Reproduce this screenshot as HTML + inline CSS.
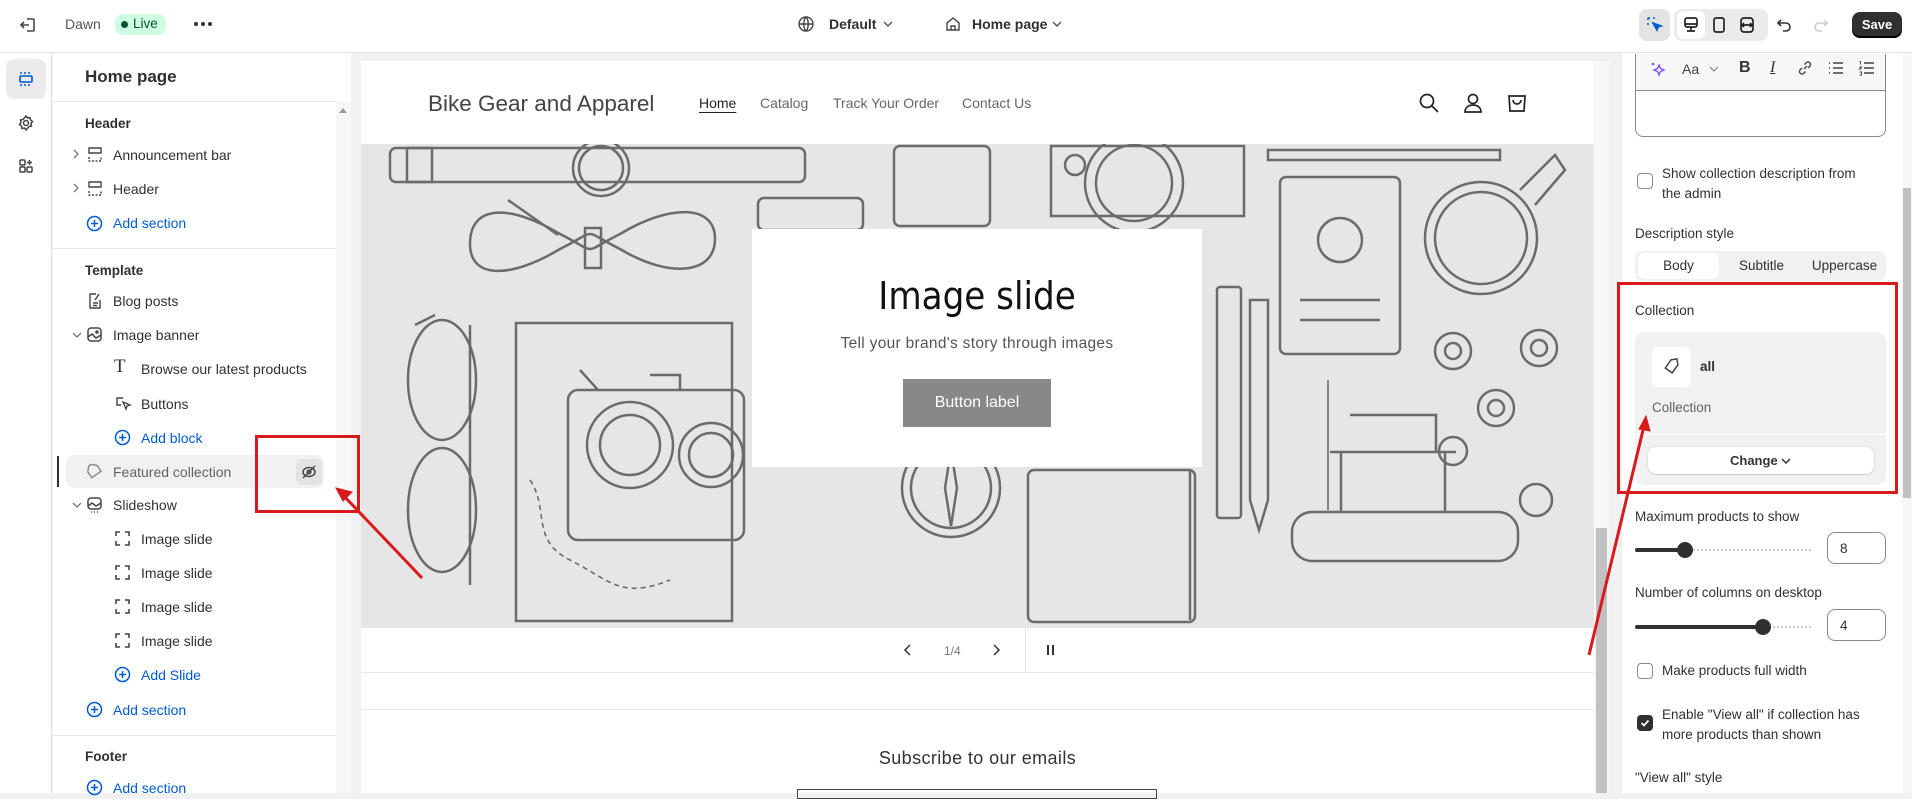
<!DOCTYPE html>
<html><head><meta charset="utf-8"><style>
*{box-sizing:border-box;margin:0;padding:0}
body{width:1912px;height:793px;overflow:hidden;background:#f1f1f1;font-family:"Liberation Sans",sans-serif;color:#303030;position:relative}
.a{position:absolute}
.t{position:absolute;font-size:14px;white-space:nowrap}
.blue{color:#005bd3}
.ic{position:absolute}
</style></head><body>

<!-- top bar -->
<div class="a" style="left:0;top:0;width:1912px;height:53px;background:#fff;border-bottom:1px solid #e3e3e3"></div>
<svg class="ic" style="left:18px;top:15px" width="20" height="20" viewBox="0 0 20 20" fill="none" stroke="#444" stroke-width="1.6"><path d="M9 4h6a1 1 0 0 1 1 1v10a1 1 0 0 1-1 1H9"/><path d="M11 10H3M6 7l-3 3 3 3"/></svg>
<div class="t" style="left:65px;top:16px;color:#555">Dawn</div>
<div class="a" style="left:115px;top:14px;width:51px;height:21px;background:#cdfee1;border-radius:8px"></div>
<div class="a" style="left:121px;top:21px;width:7px;height:7px;border-radius:50%;background:#0c5132"></div>
<div class="t" style="left:133px;top:16px;color:#0c5132;font-size:13.5px">Live</div>
<svg class="ic" style="left:193px;top:20px" width="20" height="8" fill="#333"><circle cx="3" cy="4" r="2"/><circle cx="10" cy="4" r="2"/><circle cx="17" cy="4" r="2"/></svg>

<svg class="ic" style="left:797px;top:15px" width="18" height="18" viewBox="0 0 18 18" fill="none" stroke="#444" stroke-width="1.4"><circle cx="9" cy="9" r="7"/><path d="M2 9h14M9 2c-3 3-3 11 0 14M9 2c3 3 3 11 0 14"/></svg>
<div class="t" style="left:829px;top:16px;font-weight:bold;font-size:14px">Default</div>
<svg class="ic" style="left:882px;top:19px" width="12" height="10" viewBox="0 0 12 10" fill="none" stroke="#555" stroke-width="1.4"><path d="M2 3l4 4 4-4"/></svg>
<svg class="ic" style="left:944px;top:15px" width="18" height="18" viewBox="0 0 18 18" fill="none" stroke="#444" stroke-width="1.4"><path d="M3 8l6-5 6 5v7H3z"/><path d="M7 15v-4h4v4"/></svg>
<div class="t" style="left:972px;top:16px;font-weight:bold">Home page</div>
<svg class="ic" style="left:1051px;top:19px" width="12" height="10" viewBox="0 0 12 10" fill="none" stroke="#555" stroke-width="1.4"><path d="M2 3l4 4 4-4"/></svg>

<div class="a" style="left:1639px;top:9px;width:31px;height:32px;background:#e3e3e3;border-radius:8px"></div>
<svg class="ic" style="left:1645px;top:15px" width="20" height="20" viewBox="0 0 20 20" fill="none" stroke="#005bd3" stroke-width="1.6"><path d="M3 3h2M8 3h2M3 3v2M3 8v2" /><path d="M8 8l8 3-3 1-1 3z" fill="#005bd3"/></svg>
<div class="a" style="left:1674px;top:9px;width:94px;height:32px;background:#ebebeb;border-radius:8px"></div>
<div class="a" style="left:1677px;top:11px;width:28px;height:28px;background:#fff;border-radius:7px"></div>
<svg class="ic" style="left:1682px;top:16px" width="18" height="18" viewBox="0 0 18 18" fill="none" stroke="#222" stroke-width="1.7"><rect x="3" y="2" width="12" height="9" rx="2"/><path d="M9 11v3M5 15h8M3 8h12"/></svg>
<svg class="ic" style="left:1710px;top:16px" width="18" height="18" viewBox="0 0 18 18" fill="none" stroke="#222" stroke-width="1.7"><rect x="4" y="2" width="10" height="14" rx="2"/></svg>
<svg class="ic" style="left:1738px;top:16px" width="18" height="18" viewBox="0 0 18 18" fill="none" stroke="#222" stroke-width="1.7"><rect x="3" y="2" width="12" height="14" rx="3"/><path d="M5 9h8M6 7l-2 2 2 2M12 7l2 2-2 2"/></svg>
<svg class="ic" style="left:1776px;top:16px" width="18" height="18" viewBox="0 0 18 18" fill="none" stroke="#333" stroke-width="1.6"><path d="M5 4L2 7l3 3"/><path d="M2 7h8a4 4 0 0 1 0 8H7"/></svg>
<svg class="ic" style="left:1811px;top:16px" width="18" height="18" viewBox="0 0 18 18" fill="none" stroke="#ccc" stroke-width="1.6"><path d="M13 4l3 3-3 3"/><path d="M16 7H8a4 4 0 0 0 0 8h3"/></svg>
<div class="a" style="left:1852px;top:12px;width:50px;height:26px;background:#303030;border-radius:8px;color:#fff;font-weight:bold;font-size:13px;text-align:center;line-height:26px;box-shadow:inset 0 -2px 0 #000">Save</div>

<!-- left rail -->
<div class="a" style="left:0;top:53px;width:52px;height:740px;background:#fff;border-right:1px solid #e3e3e3"></div>
<div class="a" style="left:6px;top:59px;width:40px;height:40px;background:#ebebeb;border-radius:8px"></div>
<svg class="ic" style="left:17px;top:70px" width="18" height="18" viewBox="0 0 18 18" fill="none" stroke="#005bd3" stroke-width="1.6"><path d="M3 3h12M3 15h12" stroke-dasharray="2 2"/><rect x="3" y="6" width="12" height="6" rx="1"/></svg>
<svg class="ic" style="left:17px;top:114px" width="18" height="18" viewBox="0 0 18 18" fill="none" stroke="#444" stroke-width="1.5"><circle cx="9" cy="9" r="2.5"/><path d="M9 2l1.5 2 2.5-.5.5 2.5 2 1.5-1.5 2 .5 2.5-2.5.5L9 16l-1.5-2-2.5.5-.5-2.5-2-1.5 1.5-2L3.5 6l2.5-.5z"/></svg>
<svg class="ic" style="left:17px;top:157px" width="18" height="18" viewBox="0 0 18 18" fill="none" stroke="#444" stroke-width="1.5"><rect x="3" y="3" width="5" height="5" rx="1"/><rect x="3" y="10" width="5" height="5" rx="1"/><rect x="10" y="10" width="5" height="5" rx="1"/><path d="M12.5 3v5M10 5.5h5"/></svg>

<!-- sidebar -->
<div class="a" style="left:53px;top:53px;width:298px;height:740px;background:#fff"></div>
<div class="a" style="left:336px;top:101px;width:15px;height:692px;background:#f7f7f7"></div>
<svg class="ic" style="left:338px;top:106px" width="10" height="8"><path d="M1 7l4-5 4 5z" fill="#999"/></svg>
<div class="t" style="left:85px;top:67px;font-size:17px;font-weight:bold">Home page</div>
<div class="a" style="left:53px;top:101px;width:283px;height:1px;background:#e8e8e8"></div>
<div class="t" style="left:85px;top:116px;font-weight:bold;font-size:13.5px">Header</div>
<svg class="ic" style="left:71px;top:148px" width="10" height="12" fill="none" stroke="#777" stroke-width="1.3"><path d="M3 2l4 4-4 4"/></svg>
<svg class="ic" style="left:87px;top:146px" width="16" height="18" fill="none" stroke="#444" stroke-width="1.4"><path d="M2 11v4h12v-4" stroke-dasharray="2 1.5"/><path d="M2 2h12v5H2z"/></svg>
<div class="t" style="left:113px;top:147px">Announcement bar</div>
<svg class="ic" style="left:71px;top:182px" width="10" height="12" fill="none" stroke="#777" stroke-width="1.3"><path d="M3 2l4 4-4 4"/></svg>
<svg class="ic" style="left:87px;top:180px" width="16" height="18" fill="none" stroke="#444" stroke-width="1.4"><path d="M2 11v4h12v-4" stroke-dasharray="2 1.5"/><path d="M2 2h12v5H2z"/></svg>
<div class="t" style="left:113px;top:181px">Header</div>
<svg class="ic" style="left:86px;top:215px" width="17" height="17" fill="none" stroke="#005bd3" stroke-width="1.5"><circle cx="8.5" cy="8.5" r="7"/><path d="M8.5 5v7M5 8.5h7"/></svg>
<div class="t blue" style="left:113px;top:215px">Add section</div>
<div class="a" style="left:53px;top:248px;width:283px;height:1px;background:#e8e8e8"></div>
<div class="t" style="left:85px;top:263px;font-weight:bold;font-size:13.5px">Template</div>
<svg class="ic" style="left:87px;top:292px" width="16" height="18" fill="none" stroke="#444" stroke-width="1.4"><path d="M9 2H3v14h10V8"/><path d="M12 2l-4 6M6 11h5M6 13.5h4"/></svg>
<div class="t" style="left:113px;top:293px">Blog posts</div>
<svg class="ic" style="left:71px;top:330px" width="12" height="10" fill="none" stroke="#777" stroke-width="1.3"><path d="M2 3l4 4 4-4"/></svg>
<svg class="ic" style="left:86px;top:326px" width="17" height="17" fill="none" stroke="#444" stroke-width="1.5"><rect x="2" y="2" width="13" height="13" rx="3"/><path d="M2 11l4-3 4 4 5-3"/><circle cx="11" cy="6" r="1"/></svg>
<div class="t" style="left:113px;top:327px">Image banner</div>
<div class="t" style="left:114px;top:356px;font-family:'Liberation Serif',serif;font-size:19px">T</div>
<div class="t" style="left:141px;top:361px">Browse our latest products</div>
<svg class="ic" style="left:114px;top:395px" width="18" height="18" fill="none" stroke="#444" stroke-width="1.4"><path d="M9 3H3v7h4"/><path d="M9 7l7 3-3 1-1 3z"/></svg>
<div class="t" style="left:141px;top:396px">Buttons</div>
<svg class="ic" style="left:114px;top:429px" width="17" height="17" fill="none" stroke="#005bd3" stroke-width="1.5"><circle cx="8.5" cy="8.5" r="7"/><path d="M8.5 5v7M5 8.5h7"/></svg>
<div class="t blue" style="left:141px;top:430px">Add block</div>
<div class="a" style="left:57px;top:456px;width:2px;height:31px;background:#303030"></div>
<div class="a" style="left:66px;top:455px;width:258px;height:33px;background:#f1f1f1;border-radius:8px"></div>
<svg class="ic" style="left:86px;top:463px" width="17" height="17" fill="none" stroke="#888" stroke-width="1.4"><path d="M10 2l5 5-8 8-5-5V4l2-2z" transform="rotate(10 8 8)"/></svg>
<div class="t" style="left:113px;top:464px;color:#616161">Featured collection</div>
<div class="a" style="left:296px;top:459px;width:26px;height:26px;background:#e3e3e3;border-radius:6px"></div>
<svg class="ic" style="left:300px;top:463px" width="18" height="18" fill="none" stroke="#444" stroke-width="1.5"><ellipse cx="9" cy="9" rx="6" ry="4.5"/><circle cx="9" cy="9" r="1.8"/><path d="M3 15L15 3"/></svg>
<svg class="ic" style="left:71px;top:500px" width="12" height="10" fill="none" stroke="#777" stroke-width="1.3"><path d="M2 3l4 4 4-4"/></svg>
<svg class="ic" style="left:86px;top:496px" width="17" height="18" fill="none" stroke="#444" stroke-width="1.5"><rect x="2" y="2" width="13" height="11" rx="3"/><path d="M2 10l4-3 4 3 5-3"/><path d="M5 16h1M8 16h1M11 16h1"/></svg>
<div class="t" style="left:113px;top:497px">Slideshow</div>
<div class="t" style="left:141px;top:531px">Image slide</div>
<div class="t" style="left:141px;top:565px">Image slide</div>
<div class="t" style="left:141px;top:599px">Image slide</div>
<div class="t" style="left:141px;top:633px">Image slide</div>
<svg class="ic" style="left:114px;top:530px" width="17" height="120" fill="none" stroke="#444" stroke-width="1.6"><g id="fr"><path d="M2 6V2h4M11 2h4v4M15 11v4h-4M6 15H2v-4"/></g><use href="#fr" y="34"/><use href="#fr" y="68"/><use href="#fr" y="102"/></svg>
<svg class="ic" style="left:114px;top:666px" width="17" height="17" fill="none" stroke="#005bd3" stroke-width="1.5"><circle cx="8.5" cy="8.5" r="7"/><path d="M8.5 5v7M5 8.5h7"/></svg>
<div class="t blue" style="left:141px;top:667px">Add Slide</div>
<svg class="ic" style="left:86px;top:701px" width="17" height="17" fill="none" stroke="#005bd3" stroke-width="1.5"><circle cx="8.5" cy="8.5" r="7"/><path d="M8.5 5v7M5 8.5h7"/></svg>
<div class="t blue" style="left:113px;top:702px">Add section</div>
<div class="a" style="left:53px;top:735px;width:283px;height:1px;background:#e8e8e8"></div>
<div class="t" style="left:85px;top:749px;font-weight:bold;font-size:13.5px">Footer</div>
<svg class="ic" style="left:86px;top:779px" width="17" height="17" fill="none" stroke="#005bd3" stroke-width="1.5"><circle cx="8.5" cy="8.5" r="7"/><path d="M8.5 5v7M5 8.5h7"/></svg>
<div class="t blue" style="left:113px;top:780px">Add section</div>

<!-- preview -->
<div class="a" style="left:361px;top:61px;width:1233px;height:732px;background:#fff"></div>
<div class="a" style="left:1594px;top:61px;width:15px;height:732px;background:#f7f7f7"></div>
<div class="a" style="left:1596px;top:528px;width:11px;height:265px;background:#c1c1c1"></div>
<div class="t" style="left:428px;top:91px;font-size:22.5px;color:#444">Bike Gear and Apparel</div>
<div class="t" style="left:699px;top:95px;font-size:14px;color:#222;text-decoration:underline;text-underline-offset:4px">Home</div>
<div class="t" style="left:760px;top:95px;font-size:14px;color:#666">Catalog</div>
<div class="t" style="left:833px;top:95px;font-size:14px;color:#666">Track Your Order</div>
<div class="t" style="left:962px;top:95px;font-size:14px;color:#666">Contact Us</div>
<svg class="ic" style="left:1417px;top:91px" width="24" height="24" fill="none" stroke="#222" stroke-width="1.7"><circle cx="10" cy="10" r="6.5"/><path d="M15 15l6 6"/></svg>
<svg class="ic" style="left:1461px;top:91px" width="24" height="24" fill="none" stroke="#222" stroke-width="1.7"><circle cx="12" cy="8" r="4.5"/><path d="M4 21c0-5 4-7 8-7s8 2 8 7z"/></svg>
<svg class="ic" style="left:1505px;top:90px" width="24" height="24" fill="none" stroke="#222" stroke-width="1.7"><path d="M4 6h16l-1 15H5z"/><path d="M8 10a4 4 0 0 0 8 0"/></svg>

<div class="a" style="left:361px;top:144px;width:1233px;height:484px;background:#e6e6e6;overflow:hidden"></div>
<svg class="a" style="left:361px;top:144px" width="1233" height="484" viewBox="361 144 1233 484" fill="none" stroke="#6b6b6b" stroke-width="2.5">
<rect x="390" y="148" width="415" height="34" rx="6"/><circle cx="601" cy="168" r="28"/><circle cx="601" cy="168" r="22"/><rect x="407" y="148" width="25" height="34"/>
<path d="M470 244c0-40 40-40 90-10 40 20 20 20 60 0 50-30 95-30 95 5s-45 40-95 10c-40-20-20-20-60 0-50 30-90 30-90-5z"/><rect x="585" y="228" width="16" height="40"/><path d="M508 200l50 35"/>
<ellipse cx="442" cy="380" rx="34" ry="60"/><ellipse cx="442" cy="510" rx="34" ry="62"/><path d="M415 325l20 -10M470 325v260"/>
<rect x="516" y="323" width="216" height="298"/><rect x="568" y="390" width="176" height="150" rx="10"/><circle cx="630" cy="445" r="43"/><circle cx="630" cy="445" r="30"/><circle cx="711" cy="455" r="32"/><circle cx="711" cy="455" r="22"/><path d="M580 370l18 20M650 375h30v15"/>
<path d="M530 480c20 30 0 60 40 80s50 40 100 20" stroke-dasharray="5 4" stroke-width="1.6"/>
<rect x="894" y="146" width="96" height="80" rx="6"/><rect x="758" y="198" width="105" height="32" rx="6"/>
<rect x="1051" y="146" width="193" height="70"/><circle cx="1134" cy="183" r="49"/><circle cx="1134" cy="183" r="38"/><circle cx="1075" cy="165" r="10"/>
<circle cx="951" cy="488" r="49"/><circle cx="951" cy="488" r="40"/><path d="M951 450l6 38-6 38-6-38z"/>
<rect x="1028" y="470" width="167" height="152" rx="6"/><path d="M1190 470v150"/>
<rect x="1217" y="287" width="24" height="231" rx="3"/><path d="M1250 300h18v200l-9 30-9-30z"/>
<rect x="1280" y="177" width="120" height="177" rx="6"/><circle cx="1340" cy="240" r="22"/><path d="M1300 300h80M1300 320h80"/>
<circle cx="1481" cy="238" r="56"/><circle cx="1481" cy="238" r="46"/><path d="M1520 190l35-35 10 15-30 35"/>
<circle cx="1453" cy="351" r="18"/><circle cx="1453" cy="351" r="8"/><circle cx="1539" cy="348" r="18"/><circle cx="1539" cy="348" r="8"/><circle cx="1496" cy="408" r="18"/><circle cx="1496" cy="408" r="8"/><circle cx="1453" cy="451" r="14"/><circle cx="1536" cy="500" r="16"/>
<rect x="1292" y="512" width="226" height="49" rx="20"/><path d="M1341 512v-60h104v60M1330 452h126M1350 415h86v37"/><path d="M1328 380v130" stroke-width="1.6"/>
<path d="M1268 150h232v10H1268z"/>
</svg>
<div class="a" style="left:752px;top:229px;width:450px;height:238px;background:#fff"></div>
<div class="t" style="left:752px;top:274px;width:450px;text-align:center;font-size:38px;color:#111;font-family:'DejaVu Sans Condensed','Liberation Sans Narrow','Liberation Sans',sans-serif;font-weight:300">Image slide</div>
<div class="t" style="left:752px;top:335px;width:450px;text-align:center;font-size:15.5px;color:#555;letter-spacing:.3px">Tell your brand's story through images</div>
<div class="a" style="left:903px;top:379px;width:148px;height:48px;background:#888;color:#fff;font-size:16px;text-align:center;line-height:48px">Button label</div>

<svg class="ic" style="left:902px;top:643px" width="12" height="14" fill="none" stroke="#333" stroke-width="1.5"><path d="M8 2L3 7l5 5"/></svg>
<div class="t" style="left:944px;top:644px;font-size:12px;color:#777">1/4</div>
<svg class="ic" style="left:990px;top:643px" width="12" height="14" fill="none" stroke="#333" stroke-width="1.5"><path d="M4 2l5 5-5 5"/></svg>
<div class="a" style="left:1025px;top:628px;width:1px;height:44px;background:#e8e8e8"></div>
<div class="a" style="left:1047px;top:645px;width:2px;height:10px;background:#333"></div><div class="a" style="left:1052px;top:645px;width:2px;height:10px;background:#333"></div>
<div class="a" style="left:361px;top:672px;width:1233px;height:1px;background:#e8e8e8"></div>
<div class="a" style="left:361px;top:709px;width:1233px;height:1px;background:#e8e8e8"></div>
<div class="t" style="left:361px;top:748px;width:1233px;text-align:center;font-size:18px;color:#333;letter-spacing:.4px">Subscribe to our emails</div>
<div class="a" style="left:797px;top:789px;width:360px;height:10px;border:1px solid #444"></div>

<!-- right panel -->
<div class="a" style="left:1622px;top:53px;width:290px;height:740px;background:#fff"></div>
<div class="a" style="left:1902px;top:53px;width:10px;height:740px;background:#f7f7f7"></div>
<div class="a" style="left:1903px;top:188px;width:8px;height:310px;background:#c1c1c1"></div>
<div class="a" style="left:1635px;top:54px;width:251px;height:83px;border:1px solid #8a8a8a;border-top:none;border-radius:0 0 8px 8px;background:#fff"></div>
<div class="a" style="left:1636px;top:54px;width:249px;height:37px;background:#f7f7f7;border-bottom:1px solid #8a8a8a"></div>
<svg class="ic" style="left:1650px;top:61px" width="16" height="16" fill="#8051ff"><path d="M9 4l1.5 3.5L14 9l-3.5 1.5L9 14l-1.5-3.5L4 9l3.5-1.5z" fill="none" stroke="#8051ff" stroke-width="1.4"/><circle cx="3" cy="3" r="1.3"/></svg>
<div class="t" style="left:1682px;top:61px;font-size:14px;color:#444">Aa</div>
<svg class="ic" style="left:1709px;top:65px" width="10" height="8" fill="none" stroke="#888" stroke-width="1.2"><path d="M1 2l4 4 4-4"/></svg>
<div class="t" style="left:1739px;top:59px;font-size:16px;font-weight:bold;color:#333">B</div>
<div class="t" style="left:1770px;top:59px;font-size:16px;font-style:italic;font-family:'Liberation Serif',serif;text-decoration:underline;color:#333">I</div>
<svg class="ic" style="left:1797px;top:60px" width="16" height="16" fill="none" stroke="#444" stroke-width="1.4"><path d="M7 9l3-3M5 8l-2 2a2.5 2.5 0 0 0 3.5 3.5l2-2M11 8l2-2A2.5 2.5 0 0 0 9.5 2.5l-2 2"/></svg>
<svg class="ic" style="left:1828px;top:61px" width="16" height="14" fill="none" stroke="#444" stroke-width="1.4"><path d="M5 2h10M5 7h10M5 12h10M1 2h1M1 7h1M1 12h1"/></svg>
<svg class="ic" style="left:1858px;top:60px" width="16" height="16" fill="none" stroke="#444" stroke-width="1.4"><path d="M6 3h10M6 8h10M6 13h10"/><path d="M1.5 1.5h1v3M1.5 7h2l-2 2h2M1.5 12h2v3h-2" stroke-width="0.9"/></svg>
<div class="a" style="left:1637px;top:173px;width:16px;height:16px;border:1.5px solid #8a8a8a;border-radius:4px"></div>
<div class="t" style="left:1662px;top:164px;font-size:13.5px;line-height:20px">Show collection description from<br>the admin</div>
<div class="t" style="left:1635px;top:226px;font-size:13.5px">Description style</div>
<div class="a" style="left:1635px;top:251px;width:251px;height:30px;background:#f1f1f1;border-radius:8px"></div>
<div class="a" style="left:1638px;top:253px;width:81px;height:26px;background:#fff;border-radius:7px"></div>
<div class="t" style="left:1638px;top:258px;width:81px;text-align:center;font-size:13.5px">Body</div>
<div class="t" style="left:1720px;top:258px;width:83px;text-align:center;font-size:13.5px">Subtitle</div>
<div class="t" style="left:1803px;top:258px;width:83px;text-align:center;font-size:13.5px">Uppercase</div>
<div class="t" style="left:1635px;top:303px;font-size:13.5px">Collection</div>
<div class="a" style="left:1635px;top:332px;width:251px;height:153px;background:#f1f1f1;border-radius:10px"></div>
<div class="a" style="left:1635px;top:433px;width:251px;height:2px;background:#fafafa"></div>
<div class="a" style="left:1652px;top:347px;width:39px;height:40px;background:#fff;border-radius:6px"></div>
<svg class="ic" style="left:1663px;top:358px" width="17" height="17" fill="none" stroke="#444" stroke-width="1.5"><path d="M9 2l6 0 0 6-7 7-6-6z" transform="rotate(-10 8 8)"/></svg>
<div class="t" style="left:1700px;top:359px;font-size:13.5px;font-weight:bold">all</div>
<div class="t" style="left:1652px;top:400px;font-size:13.5px;color:#616161">Collection</div>
<div class="a" style="left:1648px;top:447px;width:226px;height:27px;background:#fff;border-radius:8px;box-shadow:0 1px 0 #ccc,0 0 0 1px #e3e3e3"></div>
<div class="t" style="left:1730px;top:453px;font-size:13px;font-weight:bold;color:#333">Change</div>
<svg class="ic" style="left:1781px;top:457px" width="10" height="8" fill="none" stroke="#333" stroke-width="1.5"><path d="M1 2l4 4 4-4"/></svg>

<div class="t" style="left:1635px;top:509px;font-size:13.5px">Maximum products to show</div>
<div class="a" style="left:1635px;top:548px;width:50px;height:4px;background:#303030;border-radius:2px"></div>
<div class="a" style="left:1690px;top:549px;width:121px;height:2px;border-top:2px dotted #ccc"></div>
<div class="a" style="left:1677px;top:542px;width:16px;height:16px;background:#303030;border-radius:50%"></div>
<div class="a" style="left:1827px;top:532px;width:59px;height:32px;border:1px solid #8a8a8a;border-radius:8px"></div>
<div class="t" style="left:1840px;top:541px;font-size:13.5px">8</div>
<div class="t" style="left:1635px;top:585px;font-size:13.5px">Number of columns on desktop</div>
<div class="a" style="left:1635px;top:625px;width:128px;height:4px;background:#303030;border-radius:2px"></div>
<div class="a" style="left:1768px;top:626px;width:43px;height:2px;border-top:2px dotted #ccc"></div>
<div class="a" style="left:1755px;top:619px;width:16px;height:16px;background:#303030;border-radius:50%"></div>
<div class="a" style="left:1827px;top:609px;width:59px;height:32px;border:1px solid #8a8a8a;border-radius:8px"></div>
<div class="t" style="left:1840px;top:618px;font-size:13.5px">4</div>
<div class="a" style="left:1637px;top:663px;width:16px;height:16px;border:1.5px solid #8a8a8a;border-radius:4px"></div>
<div class="t" style="left:1662px;top:663px;font-size:13.5px">Make products full width</div>
<div class="a" style="left:1637px;top:715px;width:16px;height:16px;background:#303030;border-radius:4px"></div>
<svg class="ic" style="left:1640px;top:718px" width="10" height="10" fill="none" stroke="#fff" stroke-width="1.8"><path d="M1.5 5l2.5 2.5 4.5-5"/></svg>
<div class="t" style="left:1662px;top:705px;font-size:13.5px;line-height:20px">Enable "View all" if collection has<br>more products than shown</div>
<div class="t" style="left:1635px;top:770px;font-size:13.5px">"View all" style</div>

<!-- annotations -->
<div class="a" style="left:255px;top:435px;width:105px;height:78px;border:3px solid #d91a1a"></div>
<div class="a" style="left:1617px;top:282px;width:281px;height:212px;border:3px solid #d91a1a"></div>
<svg class="a" style="left:0;top:0" width="1912" height="793" fill="#d91a1a" stroke="#d91a1a">
<path d="M422 578L342 494" stroke-width="3"/><path d="M336 488l16 4-9 9z"/>
<path d="M1589 655L1644 426" stroke-width="3"/><path d="M1646 416l4 15-11-2z"/>
</svg>
</body></html>
